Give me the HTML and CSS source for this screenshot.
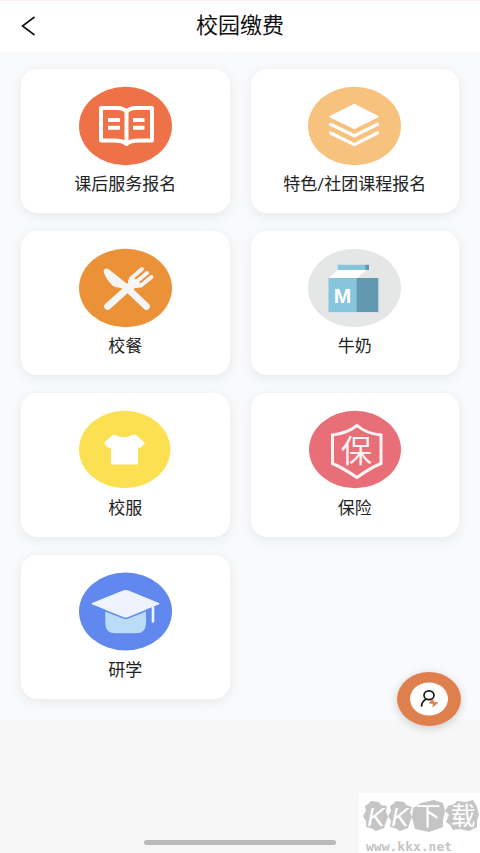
FILE: index.html
```html
<!DOCTYPE html>
<html lang="zh-CN">
<head>
<meta charset="utf-8">
<meta name="viewport" content="width=device-width, initial-scale=1">
<title>校园缴费</title>
<link rel="stylesheet" href="styles.css">
</head>
<body>
<div class="page">
  <header class="header">
    <button class="back" type="button" aria-label="返回">
      <svg width="16" height="22" viewBox="0 0 16 22"><path d="M14.5 2 2.5 11l12 9" fill="none" stroke="#111" stroke-width="1.6"/></svg>
    </button>
    <h1 class="title">校园缴费</h1>
  </header>
  <main class="content">
    <nav class="grid">
      <a class="card" href="#after-school">
        <svg class="icon" viewBox="0 0 93 78" aria-hidden="true">
          <ellipse cx="46.5" cy="39" rx="46.5" ry="39.3" fill="#ee7147"/>
          <g fill="none" stroke="#fff" stroke-width="4" stroke-linejoin="round">
            <path d="M22 21H38Q45 21 47.5 25Q50 21 57 21H73V53.5H60Q51 53.5 47.5 57Q44 53.5 35 53.5H22ZM47.5 25V57"/>
            <path d="M29 33H41M29 40.7H41M54 33H65.5M54 40.7H65.5"/>
          </g>
        </svg>
        <span class="label">课后服务报名</span>
      </a>
      <a class="card" href="#clubs">
        <svg class="icon" viewBox="0 0 93 78" aria-hidden="true">
          <ellipse cx="46.5" cy="39" rx="46.5" ry="39.3" fill="#f6c27d"/>
          <path d="M46.3 18 69.5 29.7 46.3 41.2 22.5 29.7Z" fill="#fff" stroke="#fff" stroke-width="2" stroke-linejoin="round"/>
          <path d="M22.5 37.3 46.3 48.8 69.5 37.3M22.5 46 46.3 57.6 69.5 46" fill="none" stroke="#fff" stroke-width="3.2" stroke-linecap="round" stroke-linejoin="round"/>
        </svg>
        <span class="label">特色/社团课程报名</span>
      </a>
      <a class="card" href="#meals">
        <svg class="icon" viewBox="0 0 93 78" aria-hidden="true">
          <ellipse cx="46.5" cy="39" rx="46.5" ry="39.3" fill="#eb9238"/>
          <g fill="none" stroke="#f5f5f5" stroke-linecap="round">
            <path d="M28.7 57.3 52 36.5M47 38 67.3 57.3" stroke-width="7"/>
            <path d="M52 29.5 63 20M57 33 68 24M62 36.5 72.5 28" stroke-width="4"/>
          </g>
          <path d="M24.5 22Q26 18 30 20.5L49.5 36 44 40Q42 38.5 39 38.5T33.5 36.5Q26.5 30 24.5 22ZM49.5 30.5Q48 33 50.5 35.5L49 38 54 41 56 39Q61 39.5 64 36.5L60 33 55 29Z" fill="#f5f5f5"/>
        </svg>
        <span class="label">校餐</span>
      </a>
      <a class="card" href="#milk">
        <svg class="icon" viewBox="0 0 93 78" aria-hidden="true">
          <ellipse cx="46.5" cy="39" rx="46.5" ry="39.3" fill="#e5e7e6"/>
          <path d="M29.7 21H58.5L48.7 29.5H20.5Z" fill="#fff"/>
          <path d="M29.7 15.7H58V21H29.7ZM20.5 29H49V63H20.5Z" fill="#86c5dc"/>
          <path d="M57.3 15.7H61V21H57.3ZM48.7 29H70.5V63H48.7Z" fill="#6299ae"/>
          <path d="M20 63.5H71V29" fill="none" stroke="#d3dff0" stroke-width="1"/>
          <text class="milk-letter" x="34.5" y="53.5">M</text>
        </svg>
        <span class="label">牛奶</span>
      </a>
      <a class="card" href="#uniform">
        <svg class="icon" viewBox="0 0 93 78" aria-hidden="true">
          <ellipse cx="45.7" cy="38.5" rx="45.7" ry="38.7" fill="#fbe152"/>
          <path d="M35.5 24Q45 29.5 54.5 24L57 24.5 65.5 32 61 37 58.5 35.5V53H32.5V35.5L30 37 25.5 32 33.5 24.5Z" fill="#fff" stroke="#fff" stroke-width="1" stroke-linejoin="round"/>
        </svg>
        <span class="label">校服</span>
      </a>
      <a class="card" href="#insurance">
        <svg class="icon" viewBox="0 0 93 78" aria-hidden="true">
          <ellipse cx="47" cy="38.5" rx="46" ry="38.7" fill="#e86f78"/>
          <path d="M49 14.5Q58 22.5 73 24V52.5Q62 57 49 66.5Q35 57 24.5 52.5V24Q39 22.5 49 14.5Z" fill="none" stroke="#fff3f3" stroke-width="3"/>
          <text class="shield-letter" x="48.5" y="51">保</text>
        </svg>
        <span class="label">保险</span>
      </a>
      <a class="card" href="#study">
        <svg class="icon" viewBox="0 0 93 78" aria-hidden="true">
          <ellipse cx="46.5" cy="38.5" rx="46.5" ry="39" fill="#6188ee"/>
          <path d="M26.3 36H67V50Q67 60.3 57 60.3H36.5Q26.3 60.3 26.3 50Z" fill="#bbdcf7"/>
          <path d="M13 30 44 17.5Q46.7 16.5 49.5 17.5L80 30Q81 30.7 80 31.5L49.5 43.5Q46.7 44.8 44 43.5L13 31.5Q12 30.7 13 30Z" fill="#eff3ff"/>
          <path d="M12 32 43.5 44.7Q46.7 46 50 44.7L81 32" fill="none" stroke="#6188ee" stroke-width="1.4"/>
          <path d="M74 34V48.5" stroke="#eff3ff" stroke-width="2.6" stroke-linecap="round"/>
        </svg>
        <span class="label">研学</span>
      </a>
    </nav>
    <button class="service" type="button" aria-label="客服">
      <svg width="64" height="54" viewBox="0 0 64 54">
        <ellipse cx="32" cy="27" rx="32" ry="27" fill="#df7f4e"/>
        <ellipse cx="32" cy="27" rx="19" ry="16.5" fill="#fff"/>
        <g fill="none" stroke="#181818" stroke-width="1.7" stroke-linecap="round"><ellipse cx="32" cy="23.3" rx="5" ry="4.4"/><path d="M24.6 34Q24.8 29.5 28.8 27.2"/></g>
        <path d="M36 27.3 32.2 31 36.5 31.7 35.8 34.8 40.7 30.8 36.4 30.2Z" fill="#df7f4e" stroke="#df7f4e" stroke-width=".8" stroke-linejoin="round"/>
      </svg>
    </button>
  </main>
  <footer class="footer">
    <div class="home-bar"></div>
    <div class="watermark">
      <svg width="121" height="40" viewBox="0 0 121 40">
        <g fill="#c5c5c5">
          <path d="M6 13 9 11 12 8 20 9 22 12 28 13 27 19 29 24 27 29 25 35 17 38 12 35 7 34 7 28 4 23 7 18Z"/>
          <path d="M31 13 34 11 37 8 45 9 47 12 53 14 51 19 53 24 51 29 49 35 41 38 36 35 31 34 32 28 29 23 32 18Z"/>
          <path d="M54 15 62 10 75 7 84 10 86 18 84 27 84 34 70 39 56 36 53 25Z"/>
          <path d="M89 13 95 11 98 8 107 9 114 7 118 14 120 22 118 27 118 34 110 38 101 36 94 37 91 32 87 29 90 22 86 18Z"/>
        </g>
        <g class="brand">
          <text class="brand-latin" x="17" y="33">K</text>
          <text class="brand-latin" x="41" y="33">K</text>
          <text x="69" y="32">下</text>
          <text x="104" y="32">载</text>
        </g>
      </svg>
      <span class="site">www.kkx.net</span>
    </div>
  </footer>
</div>
</body>
</html>
```
FILE: styles.css
```css
* {
  box-sizing: border-box;
}

body {
  margin: 0;
  background: #f7f7f7;
  color: #222;
  font-family: Roboto, "Noto Sans CJK SC", sans-serif;
}

button {
  padding: 0;
  border: 0;
  background: none;
  cursor: pointer;
}

svg {
  display: block;
}

.page {
  position: relative;
  display: flex;
  flex-direction: column;
  min-height: 100vh;
}

.header {
  display: grid;
  grid-template-columns: 40px 1fr 40px;
  align-items: center;
  height: 51px;
  padding: 0 20px;
  border-top: 1px solid #ffefef;
  background: #fff;
}

.title {
  margin: 0;
  color: #111;
  font-size: 22px;
  font-weight: 400;
  line-height: 32px;
  text-align: center;
}

.content {
  position: relative;
  padding: 18px 21px 20px;
  background: #f9fafc;
}

.grid {
  display: grid;
  grid-template-columns: 1fr 1fr;
  gap: 18px 21px;
}

.card {
  display: flex;
  flex-direction: column;
  align-items: center;
  gap: 7px;
  height: 144px;
  padding-top: 18px;
  border-radius: 16px;
  background: #fff;
  box-shadow: 0 3px 12px rgba(40, 50, 60, 0.09);
  color: #222;
  text-decoration: none;
}

.icon {
  width: 93px;
  height: 78px;
  overflow: visible;
}

.label {
  font-size: 17px;
  line-height: 24px;
}

.milk-letter {
  fill: #fff;
  font: bold 21px "Liberation Sans", sans-serif;
  text-anchor: middle;
}

.shield-letter {
  fill: #fff3f3;
  font: 31px "Noto Sans CJK SC", sans-serif;
  text-anchor: middle;
}

.service {
  position: absolute;
  right: 19px;
  bottom: -7px;
  border-radius: 50%;
  box-shadow: 0 2px 8px rgba(40, 50, 60, 0.22);
}

.footer {
  display: flex;
  flex: 1;
  align-items: flex-end;
  justify-content: center;
  padding-bottom: 8px;
}

.home-bar {
  width: 40%;
  height: 5px;
  border-radius: 3px;
  background: #b9bab9;
}

.watermark {
  position: absolute;
  right: 0;
  bottom: 0;
  width: 121px;
  height: 60px;
  background: #fff;
}

.brand {
  fill: #fff;
  font: 25px "Noto Sans CJK SC", sans-serif;
  text-anchor: middle;
}

.brand-latin {
  font: italic 26px "Liberation Sans", sans-serif;
}

.site {
  display: block;
  padding-left: 7px;
  color: #c5c5c5;
  font: bold 13px/28px "DejaVu Sans Mono", monospace;
}
```
